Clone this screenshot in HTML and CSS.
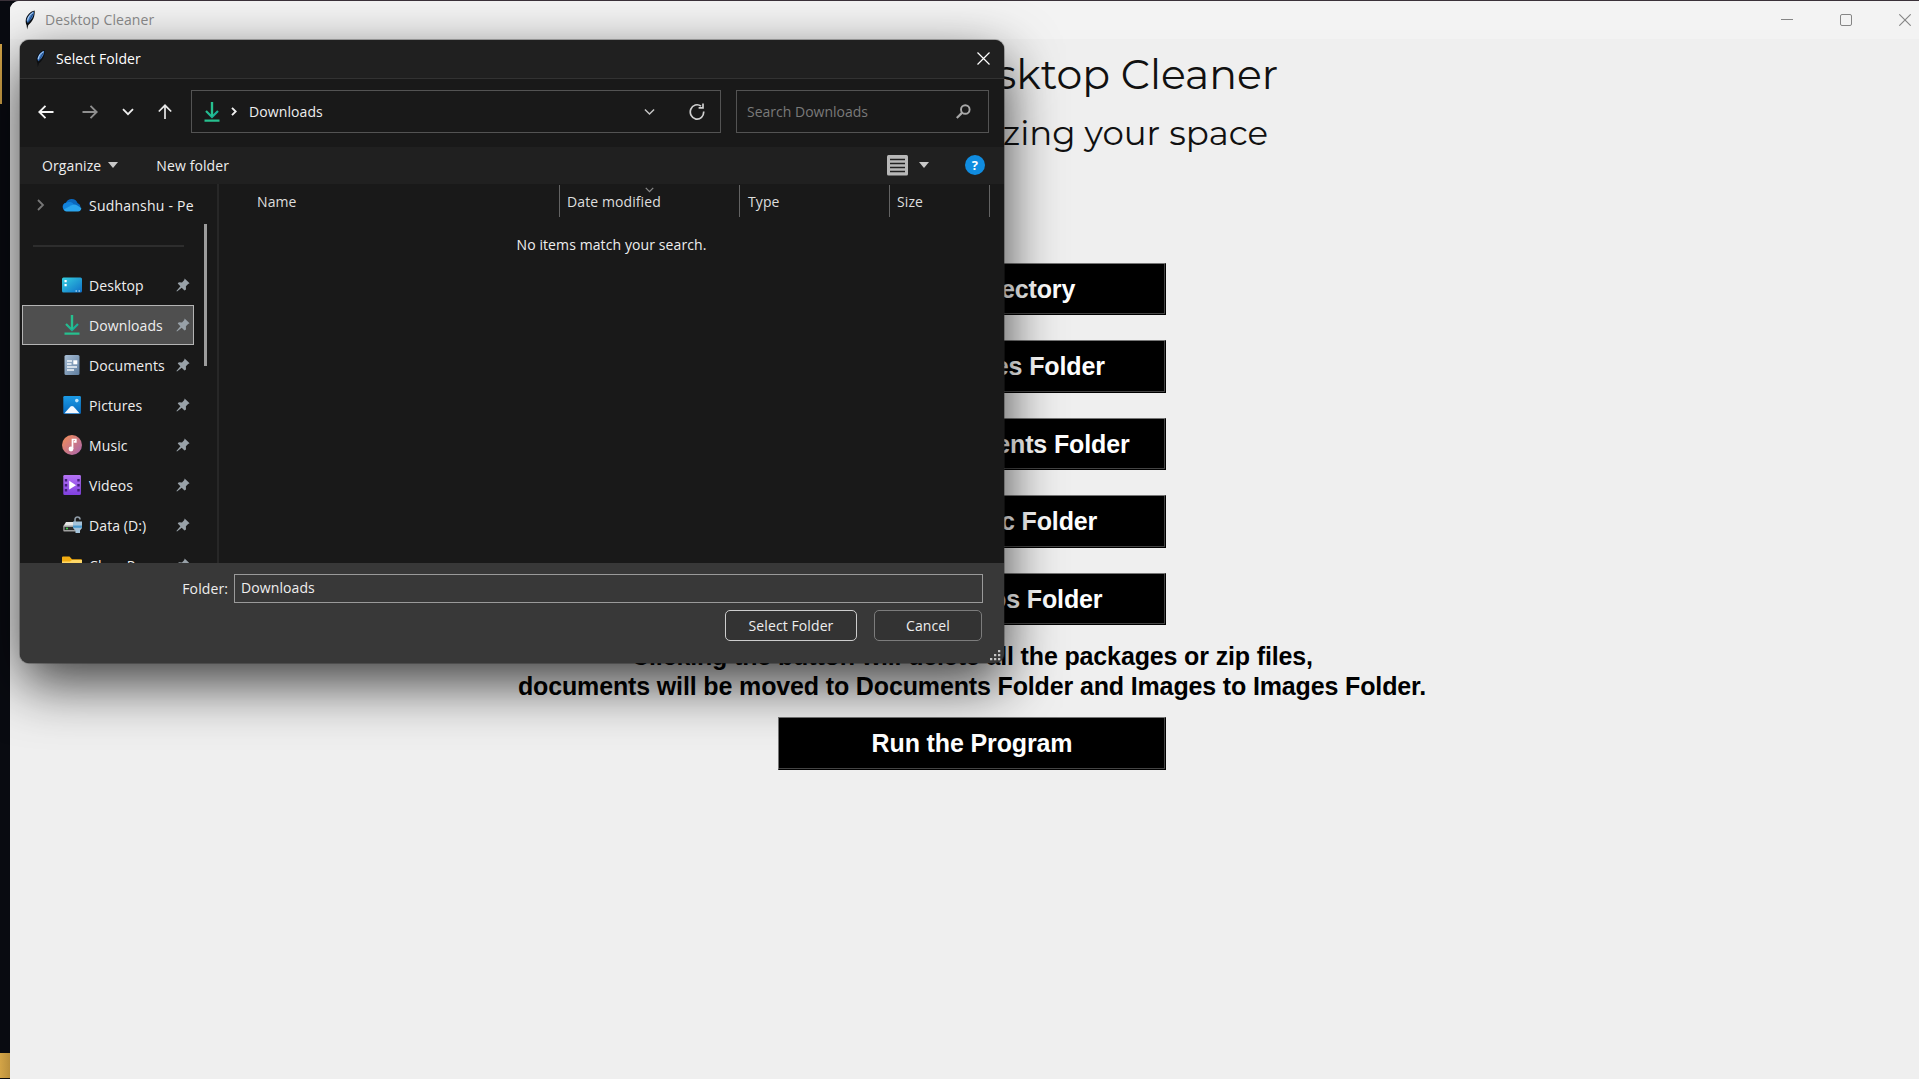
FILE: index.html
```html
<!DOCTYPE html>
<html lang="en">
<head>
<meta charset="utf-8">
<title>Desktop Cleaner</title>
<link rel="stylesheet" href="styles.css">
</head>
<body>
<svg class="defs" width="0" height="0">
  <defs>
    <linearGradient id="g-desk" x1="0" y1="0" x2="1" y2="1"><stop offset="0" stop-color="#35d0e0"/><stop offset="1" stop-color="#0f6fc8"/></linearGradient>
    <linearGradient id="g-doc" x1="0" y1="0" x2="1" y2="1"><stop offset="0" stop-color="#a9bfd6"/><stop offset="1" stop-color="#5f7e9f"/></linearGradient>
    <linearGradient id="g-pic" x1="0" y1="0" x2="0" y2="1"><stop offset="0" stop-color="#1c9be6"/><stop offset="1" stop-color="#0668bd"/></linearGradient>
    <linearGradient id="g-mus" x1="0" y1="0" x2="1" y2="1"><stop offset="0" stop-color="#f59055"/><stop offset="1" stop-color="#a763b0"/></linearGradient>
    <linearGradient id="g-vid" x1="0" y1="0" x2="0" y2="1"><stop offset="0" stop-color="#b573f5"/><stop offset="1" stop-color="#8040e0"/></linearGradient>
    <linearGradient id="g-green" x1="0" y1="0" x2="1" y2="1"><stop offset="0" stop-color="#2fc98a"/><stop offset="1" stop-color="#14a99a"/></linearGradient>
    <symbol id="feather" viewBox="0 0 12 20">
      <path d="M10.600.6C7 1.200 2.200 5.400 1.700 10.400c-.1 1.800.2 3.400.9 4.600l.5 4.600 1.100-4.400C8.500 12 11.400 6 10.600.6z" fill="#0b0d10"/>
      <path d="M10 1.500C6.400 2.700 3 6.300 2.600 10.600l.8 2.200C7 10.600 10 6.400 10 1.500z" fill="#4583d0"/>
      <path d="M9 2.600C6.500 4 4 7 3.500 10.500" fill="none" stroke="#c3dbf5" stroke-width="1"/>
      <path d="M8.800 4L4 13" fill="none" stroke="#1d3d6b" stroke-width=".8"/>
    </symbol>
    <symbol id="download" viewBox="0 0 16 20">
      <path d="M8 0v14.500M2 9l6 6 6-6" fill="none" stroke="url(#g-green)" stroke-width="2.200"/>
      <path d="M6.900 0h2.200v14H6.900zM.5 17.600h15v2.200H.5z" fill="#27c08f"/>
    </symbol>
    <symbol id="pin" viewBox="0 0 14 14">
      <path d="M8.600.6l5 4.700-1.500.6-2.200 2.400.1 3.100-1.500 1-2.800-2.700L1 13.600l-.6-.5 4-4.800L1.700 5.600l1.200-1.300 3.100.1L8.300 2z" fill="#98a1a8"/>
    </symbol>
    <symbol id="chev" viewBox="0 0 12 8"><path d="M1 1.200l5 5 5-5" fill="none" stroke="currentColor" stroke-width="1.800"/></symbol>
  </defs>
</svg>

<div class="gold gold-top"></div>
<div class="gold gold-bottom"></div>

<main class="window">
  <header class="window-bar">
    <svg class="feather" width="12" height="20"><use href="#feather"/></svg>
    <span class="window-title">Desktop Cleaner</span>
    <div class="controls">
      <svg width="12" height="12" viewBox="0 0 12 12"><path d="M0 5.500h12" stroke="#858585"/></svg>
      <svg width="12" height="12" viewBox="0 0 12 12"><rect x=".5" y=".5" width="11" height="11" rx="1.500" fill="none" stroke="#858585"/></svg>
      <svg width="12" height="12" viewBox="0 0 12 12"><path d="M.3.3l11.400 11.400M11.700.3L.3 11.700" stroke="#858585" stroke-width="1.100"/></svg>
    </div>
  </header>
  <section class="app">
    <h1>Welcome to Desktop Cleaner</h1>
    <h2>Start organizing your space</h2>
    <div class="actions">
      <button>Choose Directory</button>
      <button>Choose Images Folder</button>
      <button>Choose Documents Folder</button>
      <button>Choose Music Folder</button>
      <button>Choose Videos Folder</button>
    </div>
    <p class="note">Clicking the button will delete all the packages or zip files,<br>documents will be moved to Documents Folder and Images to Images Folder.</p>
    <button>Run the Program</button>
  </section>
</main>

<div class="dialog">
  <header class="dialog-bar">
    <svg width="11" height="19"><use href="#feather"/></svg>
    <span class="dialog-title">Select Folder</span>
    <svg class="close" width="13" height="13" viewBox="0 0 13 13"><path d="M.5.5l12 12M12.500.5l-12 12" stroke="#fff" stroke-width="1.200"/></svg>
  </header>
  <nav class="nav">
    <div class="arrows">
      <svg width="16" height="14" viewBox="0 0 16 14"><path d="M15.500 7H1.500M7.500.8L1.300 7l6.200 6.200" fill="none" stroke="#f4f4f4" stroke-width="1.900"/></svg>
      <svg class="forward" width="16" height="14" viewBox="0 0 16 14"><path d="M.5 7h14M8.500.8L14.700 7l-6.200 6.200" fill="none" stroke="#8f8f8f" stroke-width="1.900"/></svg>
      <svg class="recent" width="12" height="8"><use href="#chev"/></svg>
      <svg class="up" width="14" height="15" viewBox="0 0 14 15"><path d="M7 15V1.500M.8 7.500L7 1.300l6.200 6.200" fill="none" stroke="#e8e8e8" stroke-width="1.700"/></svg>
    </div>
    <div class="address">
      <svg width="16" height="20"><use href="#download"/></svg>
      <svg class="crumb" width="6" height="9" viewBox="0 0 6 9"><path d="M1 .8l3.700 3.700L1 8.200" fill="none" stroke="#f0f0f0" stroke-width="1.900"/></svg>
      <span class="path">Downloads</span>
      <svg class="drop" width="11" height="8" viewBox="0 0 12 8"><path d="M1 1.200l5 5 5-5" fill="none" stroke="#c4c4c4" stroke-width="1.600"/></svg>
      <svg width="16" height="18" viewBox="0 0 16 18"><path d="M14.700 8.500a6.700 7.200 0 1 1-2.700-5.300M9.600 4.800h4.400V.6" fill="none" stroke="#d0d0d0" stroke-width="1.700"/></svg>
    </div>
    <div class="search">
      <span>Search Downloads</span>
      <svg width="15" height="15" viewBox="0 0 15 15"><circle cx="9.300" cy="5.500" r="4.300" fill="none" stroke="#a8a8a8" stroke-width="1.900"/><path d="M6.200 8.600L.8 14" stroke="#a8a8a8" stroke-width="2.200"/></svg>
    </div>
  </nav>
  <div class="toolbar">
    <span class="organize">Organize</span>
    <i class="caret"></i>
    <span class="new-folder">New folder</span>
    <svg class="view" width="21" height="21" viewBox="0 0 21 21"><rect width="21" height="20.500" rx="1.500" fill="#b8b8b8"/><path d="M3 4.500h15M3 8.500h15M3 12.500h15M3 16.500h15" stroke="#222" stroke-width="1.300"/></svg>
    <i class="caret"></i>
    <span class="help">?</span>
  </div>
  <div class="content">
    <aside class="sidebar">
      <div class="tree">
        <div class="item cloud">
          <svg class="expand" width="8" height="12" viewBox="0 0 8 12"><path d="M1 1l5 5-5 5" fill="none" stroke="#777" stroke-width="1.800"/></svg>
          <svg class="icon" width="20" height="14" viewBox="0 0 20 14"><path d="M4.500 13A4.200 4.200 0 0 1 4 4.700 6.200 6.200 0 0 1 15.500 5 4.300 4.300 0 0 1 16 13z" fill="#0a67bd"/><path d="M4 4.800a4.300 4.300 0 0 0-2 7l10-5.300A6 6 0 0 0 4 4.800z" fill="#1383dc"/><path d="M1.700 11.500L9.500 7.200c2-1 4-.9 5.800.2l4 2.600c0 2-1.300 3.500-3.300 3.500H4.500c-1.300 0-2.300-.8-2.800-2z" fill="#2aa5ee"/></svg>
          <span>Sudhanshu - Pe</span>
        </div>
        <div class="rule"></div>
        <div class="item">
          <svg class="icon" width="20" height="16" viewBox="0 0 20 16"><rect y=".5" width="20" height="15" rx="1.500" fill="url(#g-desk)"/><path d="M2.500 3h2.200v2.200H2.500zM2.500 7h2.200v2.200H2.500z" fill="#fff"/><path d="M13.500 14h1.500M16.500 14H18" stroke="#d5efff" stroke-width="1.200"/></svg>
          <span>Desktop</span><svg class="pin" width="14" height="14"><use href="#pin"/></svg>
        </div>
        <div class="item selected">
          <svg class="icon" width="20" height="20" viewBox="-2 0 20 20"><use href="#download" width="16" height="20"/></svg>
          <span>Downloads</span><svg class="pin" width="14" height="14"><use href="#pin"/></svg>
        </div>
        <div class="item">
          <svg class="icon" width="20" height="20" viewBox="0 0 20 20"><rect x="2.500" width="15" height="20" rx="1.500" fill="url(#g-doc)"/><path d="M5 6h5M5 9h4.500M5 12h10M5 15h7" stroke="#f2f6fa" stroke-width="1.300"/><path d="M11.300 5.300h4v4h-4z" fill="#fff"/></svg>
          <span>Documents</span><svg class="pin" width="14" height="14"><use href="#pin"/></svg>
        </div>
        <div class="item">
          <svg class="icon" width="20" height="18" viewBox="0 0 20 18"><rect x="1.300" width="17.600" height="18" rx="1.300" fill="url(#g-pic)"/><path d="M2.500 17.200l6-6.600q1.500-1.300 3 0l6 6.600z" fill="#f2f8ff"/><circle cx="14.800" cy="4.600" r="1.800" fill="#bfe4fb"/></svg>
          <span>Pictures</span><svg class="pin" width="14" height="14"><use href="#pin"/></svg>
        </div>
        <div class="item">
          <svg class="icon" width="20" height="20" viewBox="0 0 20 20"><circle cx="10" cy="10" r="10" fill="url(#g-mus)"/><path d="M10.500 14V4.500h3.300v2.300h-2" fill="none" stroke="#fff" stroke-width="1.700"/><circle cx="9" cy="14" r="2.400" fill="#fff"/></svg>
          <span>Music</span><svg class="pin" width="14" height="14"><use href="#pin"/></svg>
        </div>
        <div class="item">
          <svg class="icon" width="20" height="20" viewBox="0 0 20 20"><rect x="1.300" width="17.600" height="20" rx="1.300" fill="url(#g-vid)"/><path d="M4 4v14M16.500 4v14" stroke="#43207c" stroke-width="2.400" stroke-dasharray="2.400 2.600"/><path d="M7.200 5.800v8.800l6.800-4.400z" fill="#fff"/></svg>
          <span>Videos</span><svg class="pin" width="14" height="14"><use href="#pin"/></svg>
        </div>
        <div class="item">
          <svg class="icon" width="20" height="18" viewBox="0 0 20 18"><path d="M4 6h11l3 4H1.500z" fill="#e6e6e6"/><rect x="1.300" y="9.500" width="16" height="6" rx=".8" fill="#a0a0a0"/><path d="M2.500 11h10v3h-10z" fill="#2b2b2b"/><circle cx="5" cy="12.500" r="1" fill="#3ddc4a"/><path d="M13 6V4q0-3 2.500-3T18 3.500" fill="none" stroke="#8e9aa5" stroke-width="1.700"/><path d="M11 5.500h9V12l-2 2.500v2.500h-4.500v-2.500L11 12z" fill="#a5c3da"/><path d="M11 9.500h9v2.300h-9z" fill="#4a98cc"/></svg>
          <span>Data (D:)</span><svg class="pin" width="14" height="14"><use href="#pin"/></svg>
        </div>
        <div class="item">
          <svg class="icon" width="20" height="18" viewBox="0 0 20 18"><path d="M0 1.500Q0 .5 1 .5h6.500L10 3.200h9q1 0 1 1V17H0z" fill="#f2ad12"/><path d="M0 5.500h8l2-1.500h10V17H0z" fill="#ffd867"/></svg>
          <span>Class P</span><svg class="pin" width="14" height="14"><use href="#pin"/></svg>
        </div>
      </div>
      <div class="scroll-track"><div class="scroll-thumb"></div></div>
    </aside>
    <section class="files">
      <div class="columns">
        <span class="col name">Name</span>
        <span class="col date">Date modified<svg class="sort" width="9" height="6" viewBox="0 0 12 8"><path d="M1 1.200l5 5 5-5" fill="none" stroke="#888" stroke-width="1.700"/></svg></span>
        <span class="col type">Type</span>
        <span class="col size">Size</span>
      </div>
      <p class="empty">No items match your search.</p>
    </section>
  </div>
  <footer class="footer">
    <div class="field"><span class="label">Folder:</span><div class="input">Downloads</div></div>
    <div class="buttons"><span class="btn primary">Select Folder</span><span class="btn cancel">Cancel</span></div>
    <svg class="grip" width="11" height="11" viewBox="0 0 11 11"><path d="M8 0h2.300v2.300H8zM4 4h2.300v2.300H4zM8 4h2.300v2.300H8zM0 8h2.300v2.300H0zM4 8h2.300v2.300H4zM8 8h2.300v2.300H8z" fill="#c4c4c4"/></svg>
  </footer>
</div>
</body>
</html>
```
FILE: styles.css
```css
* { box-sizing: border-box; }
body {
  margin: 0;
  width: 1919px;
  height: 1079px;
  overflow: hidden;
  position: relative;
  background: #090b11;
  border-top: 1px solid #3a3139;
  font-family: "Open Sans", "Noto Sans", sans-serif;
  font-size: 14px;
  letter-spacing: .1px;
}
svg { display: block; flex: none; }
.defs { position: absolute; }
.gold { position: absolute; left: 0; background: #d3a447; }
.gold-top { top: 43px; width: 2px; height: 60px; }
.gold-bottom { top: 1052px; width: 10px; height: 25px; background: linear-gradient(90deg, #d3a447, #b98f3d); }

/* Main application window */
.window {
  margin-left: 10px;
  height: 1078px;
  background: #efefef;
  border-radius: 9px 0 0 0;
  overflow: hidden;
}
.window-bar {
  height: 38px;
  background: #f3f3f3;
  display: flex;
  align-items: center;
  padding: 0 8px 1px 14px;
}
.window-title { margin-left: 9px; color: #8b8b8b; }
.controls { margin-left: auto; display: flex; gap: 47px; }
.app {
  padding: 8px 0 0 15px;
  display: flex;
  flex-direction: column;
  align-items: center;
}
h1, h2 {
  margin: 0;
  font-family: Montserrat, Inter, sans-serif;
  font-weight: 400;
  color: #111;
  white-space: nowrap;
  letter-spacing: 0;
}
h1 { font-size: 41px; line-height: 54px; margin-left: 13px; }
h2 { font-size: 34px; line-height: 46px; margin: 9px 0 0 126px; }
.actions { display: flex; flex-direction: column; gap: 25px; margin-top: 106.5px; }
button {
  width: 388px;
  height: 52.5px;
  padding: 1px 0 0;
  border: 1px solid #000;
  border-top-color: #767676;
  border-left-color: #767676;
  background: #000;
  box-shadow: inset -1px -1px #444;
  color: #fff;
  font: bold 25px "Liberation Sans", Arial, sans-serif;
  letter-spacing: -.13px;
}
.note {
  margin: 16px 0;
  color: #000;
  font: bold 25px/30px "Liberation Sans", Arial, sans-serif;
  letter-spacing: -.14px;
  text-align: center;
  white-space: nowrap;
}

/* Folder picker, floating over the application */
.dialog {
  position: absolute;
  left: 20px;
  top: 39px;
  width: 984px;
  height: 623px;
  border-radius: 9px;
  background: #191919;
  color: #eee;
  box-shadow: 0 20px 56px rgba(0, 0, 0, .75), 0 0 0 1px rgba(70, 70, 70, .35);
  overflow: hidden;
  display: flex;
  flex-direction: column;
  white-space: nowrap;
}
.dialog-bar {
  height: 39px;
  background: #202020;
  border-bottom: 1px solid #323232;
  display: flex;
  align-items: center;
  padding: 0 14px 2px 15px;
}
.dialog-title { margin-left: 10px; color: #fff; }
.close { margin-left: auto; }
.nav { height: 68px; display: flex; align-items: center; padding: 0 15px 3px 18px; }
.arrows { display: flex; align-items: center; width: 153px; }
.forward { margin-left: 28px; }
.recent { margin-left: 24px; }
.up { margin-left: 24px; }
.address, .search { height: 43px; border: 1px solid #535353; display: flex; align-items: center; }
.address { width: 530px; padding: 0 15px 0 12px; }
.crumb { margin-left: 11px; }
.path { margin-left: 12px; }
.drop { margin-left: auto; margin-right: 34px; }
.search { width: 253px; margin-left: 15px; padding: 0 17px 0 10px; justify-content: space-between; color: #7a7a7a; letter-spacing: 0; }
.toolbar { height: 37px; background: #202020; display: flex; align-items: center; padding: 0 19px 1px 22px; }
.caret { border: 5.5px solid transparent; border-top: 6px solid #c8c8c8; border-bottom: 0; margin-left: 7px; }
.new-folder { margin-left: 38px; }
.view { margin-left: auto; }
.view + .caret { margin-left: 11px; }
.help {
  width: 20px;
  height: 20px;
  margin-left: 36px;
  border-radius: 50%;
  background: #108ce0;
  color: #fff;
  font-weight: 700;
  font-size: 13px;
  line-height: 20px;
  text-align: center;
}
.content { height: 379px; display: flex; overflow: hidden; }
.sidebar { width: 199px; border-right: 2px solid #272727; display: flex; }
.tree { width: 174px; padding: 1px 0 0 2px; overflow: hidden; }
.item { height: 40px; display: flex; align-items: center; padding: 0 4px 0 40px; }
.item span { margin-left: 7px; }
.pin { margin-left: auto; }
.cloud { padding: 0 0 0 15px; overflow: hidden; }
.cloud .icon { margin-left: 17px; }
.cloud span { letter-spacing: .22px; }
.rule { height: 2px; background: #2d2d2d; margin: 20px 10px 18px 11px; }
.selected { background: #4f4f4f; border: 1px solid #b4b4b4; padding: 0 3px 0 39px; }
.scroll-track { padding: 40px 0 0 10px; }
.scroll-thumb { width: 2.5px; height: 142px; background: #9c9c9c; }
.files { flex: 1; }
.columns { display: flex; height: 33px; padding-top: 1px; color: #dedede; }
.col { position: relative; height: 32px; line-height: 33px; border-right: 1px solid #636363; }
.name { width: 341px; padding-left: 38px; }
.date { width: 180px; padding-left: 7px; }
.type { width: 150px; padding-left: 8px; }
.size { width: 100px; padding-left: 7px; }
.sort { position: absolute; left: 85px; top: 2px; }
.empty { margin: 18px 0 0; text-align: center; line-height: 20px; }
.footer { flex: 1; background: #383838; position: relative; padding: 11px 21px 0 0; }
.field { display: flex; justify-content: flex-end; align-items: center; }
.input { width: 749px; height: 29px; margin-left: 6px; border: 1px solid #9a9a9a; padding-left: 6px; line-height: 25px; }
.buttons { display: flex; justify-content: flex-end; gap: 17px; margin: 7px 1px 0 0; }
.btn { height: 31px; border: 1.5px solid #7c7c7c; border-radius: 5px; background: #333; text-align: center; line-height: 29px; }
.primary { width: 132px; border-color: #cdcdcd; }
.cancel { width: 108px; }
.grip { position: absolute; right: 3px; bottom: 2px; }
```
